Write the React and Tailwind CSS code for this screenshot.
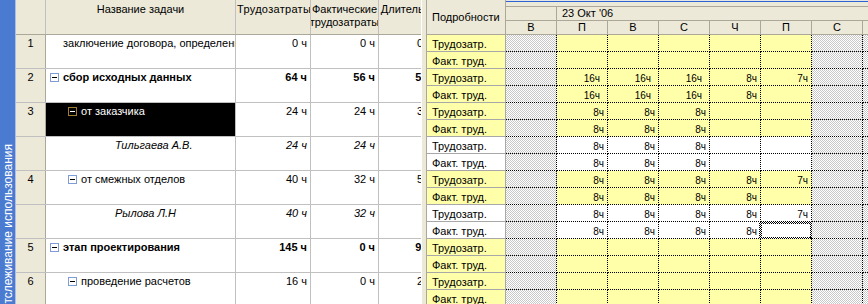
import React from "react";

const YEL = "bg-[#ffffaa]";
const GRY =
  "bg-[#e4e4e4] bg-[url('data:image/svg+xml,%3Csvg%20xmlns=%22http://www.w3.org/2000/svg%22%20width=%222%22%20height=%222%22%20shape-rendering=%22crispEdges%22%3E%3Crect%20width=%222%22%20height=%222%22%20fill=%22%23ffffff%22/%3E%3Cpath%20d=%22M0%200h1v1H0zM1%201h1v1H1z%22%20fill=%22%23c8c8c8%22/%3E%3C/svg%3E')] bg-repeat bg-fixed";
const SELFRAME =
  "bg-[#808080] bg-[url('data:image/svg+xml,%3Csvg%20xmlns=%22http://www.w3.org/2000/svg%22%20width=%222%22%20height=%222%22%20shape-rendering=%22crispEdges%22%3E%3Crect%20width=%222%22%20height=%222%22%20fill=%22%23ffffff%22/%3E%3Cpath%20d=%22M0%200h1v1H0zM1%201h1v1H1z%22%20fill=%22%23000000%22/%3E%3C/svg%3E')] bg-repeat bg-fixed";

const rows = [
  { num: "1", name: "заключение договора, определение сроков", level: 1, box: false, work: "0 ч", act: "0 ч", dur: "0 дней" },
  { num: "2", name: "сбор исходных данных", level: 1, box: true, bold: true, work: "64 ч", act: "56 ч", dur: "5 дней" },
  { num: "3", name: "от заказчика", level: 2, box: true, selected: true, work: "24 ч", act: "24 ч", dur: "3 дней" },
  { num: "", name: "Тильгаева А.В.", assign: true, work: "24 ч", act: "24 ч", dur: "" },
  { num: "4", name: "от смежных отделов", level: 2, box: true, work: "40 ч", act: "32 ч", dur: "5 дней" },
  { num: "", name: "Рылова Л.Н", assign: true, work: "40 ч", act: "32 ч", dur: "" },
  { num: "5", name: "этап проектирования", level: 1, box: true, bold: true, work: "145 ч", act: "0 ч", dur: "9 дней" },
  { num: "6", name: "проведение расчетов", level: 2, box: true, work: "16 ч", act: "0 ч", dur: "2 дней" },
];

const groups = [
  { a: false, t: [], f: [] },
  { a: false, t: ["", "16ч", "16ч", "16ч", "8ч", "7ч"], f: ["", "16ч", "16ч", "16ч", "8ч"] },
  { a: false, t: ["", "8ч", "8ч", "8ч"], f: ["", "8ч", "8ч", "8ч"] },
  { a: true, t: ["", "8ч", "8ч", "8ч"], f: ["", "8ч", "8ч", "8ч"] },
  { a: false, t: ["", "8ч", "8ч", "8ч", "8ч", "7ч"], f: ["", "8ч", "8ч", "8ч", "8ч"] },
  { a: true, t: ["", "8ч", "8ч", "8ч", "8ч", "7ч"], f: ["", "8ч", "8ч", "8ч", "8ч"], sel: 5 },
  { a: false, t: [], f: [] },
  { a: false, t: [], f: [] },
];

const days = ["В", "П", "В", "С", "Ч", "П", "С", "В"];
const weekend = [true, false, false, false, false, false, true, true];

function MinusBox({ selected }) {
  return (
    <div
      className={
        selected
          ? "mt-[2px] mr-[4px] w-[9px] h-[9px] shrink-0 border border-[#a08030] bg-black flex items-center justify-center"
          : "mt-[2px] mr-[4px] w-[9px] h-[9px] shrink-0 border border-[#7f9cd8] bg-white flex items-center justify-center"
      }
    >
      <div className={selected ? "w-[5px] h-px bg-white" : "w-[5px] h-px bg-black"} />
    </div>
  );
}

function Sidebar() {
  return (
    <div className="w-[16px] h-full shrink-0 bg-[#4b7bd1] border-r border-[#a9bfe8] overflow-hidden">
      <div className="h-[456px] flex items-center justify-center">
        <span className="[writing-mode:vertical-rl] rotate-180 text-white text-[12px] leading-[14px] whitespace-nowrap">
          Отслеживание использования
        </span>
      </div>
    </div>
  );
}

function LeftTable() {
  return (
    <div className="w-[405px] h-full shrink-0 overflow-hidden">
      <div className="w-[439px]">
        <div className="flex h-[35px] bg-[#ece9d8] border-b border-[#aca899]">
          <div className="w-[30px] shrink-0 border-r border-[#c0c0c0]" />
          <div className="w-[190px] shrink-0 border-r border-[#c0c0c0] text-center pt-[3px] whitespace-nowrap overflow-hidden">
            Название задачи
          </div>
          <div className="w-[75px] shrink-0 border-r border-[#c0c0c0] text-left pl-px pt-[3px] whitespace-nowrap overflow-hidden tracking-[0.3px]">
            Трудозатраты
          </div>
          <div className="w-[68px] shrink-0 border-r border-[#c0c0c0] pt-[3px] whitespace-nowrap overflow-hidden flex flex-col items-center">
            <div>Фактические</div>
            <div>трудозатраты</div>
          </div>
          <div className="w-[76px] shrink-0 border-r border-[#c0c0c0] text-center pt-[3px] whitespace-nowrap overflow-hidden">
            Длительность
          </div>
        </div>
        {rows.map((r, i) => {
          const weight = r.bold ? "font-bold" : "";
          const ital = r.assign ? "italic" : "";
          const pl = r.assign ? "pl-[69px]" : r.level === 2 ? "pl-[22px]" : r.box ? "pl-[4px]" : "pl-[17px]";
          return (
            <div key={i} className="flex h-[34px] border-b border-[#c0c0c0]">
              <div className="w-[30px] shrink-0 bg-[#ece9d8] border-r border-[#aca899] text-center pt-[2px]">{r.num}</div>
              <div
                className={`w-[190px] shrink-0 border-r border-[#c0c0c0] flex items-start pt-[2px] whitespace-nowrap overflow-hidden ${pl} ${
                  r.selected ? "bg-black text-white" : ""
                }`}
              >
                {r.box && <MinusBox selected={r.selected} />}
                <span className={`${weight} ${ital}`}>{r.name}</span>
              </div>
              <div className={`w-[75px] shrink-0 border-r border-[#c0c0c0] text-right pr-[3px] pt-[2px] whitespace-nowrap ${weight} ${ital}`}>
                {r.work}
              </div>
              <div className={`w-[68px] shrink-0 border-r border-[#c0c0c0] text-right pr-[3px] pt-[2px] whitespace-nowrap ${weight} ${ital}`}>
                {r.act}
              </div>
              <div className={`w-[76px] shrink-0 border-r border-[#c0c0c0] text-right pr-[3px] pt-[2px] whitespace-nowrap ${weight}`}>
                {r.dur}
              </div>
            </div>
          );
        })}
      </div>
    </div>
  );
}

function Splitter() {
  return <div className="w-[6px] h-full shrink-0 bg-[#ece9d8] border-l border-white border-r border-r-[#aca899]" />;
}

function TimeCell({ v, idx, assign, sel }) {
  const bg = weekend[idx] ? GRY : assign ? "bg-white" : YEL;
  const pad = v && v.length === 3 ? "pr-[7px]" : "pr-[3px]";
  return (
    <div className={`relative w-[51px] shrink-0 h-full border-r border-b border-dotted border-black text-right text-[10px] pt-[3px] whitespace-nowrap ${pad} ${bg}`}>
      {v}
      {sel && (
        <div className={`absolute -left-[2px] -top-[1px] w-[54px] h-[19px] ${SELFRAME}`}>
          <div className="absolute inset-[3px] bg-white" />
          <div className="absolute -right-[2px] -bottom-[2px] w-[5px] h-[5px] bg-black flex items-center justify-center">
            <div className="w-px h-px bg-white" />
          </div>
        </div>
      )}
    </div>
  );
}

function SubRow({ label, vals, assign, sel }) {
  return (
    <div className="flex h-[17px] shrink-0">
      <div
        className={`w-[79px] shrink-0 h-full border-r border-b border-[#a8a8a8] pl-[5px] pt-[3px] whitespace-nowrap ${
          assign ? "bg-white" : YEL
        }`}
      >
        {label}
      </div>
      <div className="flex overflow-hidden">
        {days.map((d, idx) => (
          <TimeCell key={idx} v={vals[idx] || ""} idx={idx} assign={assign} sel={sel === idx} />
        ))}
      </div>
    </div>
  );
}

function RightPane() {
  return (
    <div className="flex-1 min-w-0 h-full flex flex-col overflow-hidden">
      <div className="flex h-[35px] shrink-0">
        <div className="w-[79px] shrink-0 bg-[#ece9d8] border-r border-b border-[#aca899] flex items-center pl-[5px] whitespace-nowrap">
          Подробности
        </div>
        <div className="flex-1 min-w-0 flex flex-col overflow-hidden">
          <div className="h-[1px] bg-[#e4e4e4]" />
          <div className="h-[1px] bg-[#2d62d4]" />
          <div className="h-[5px] bg-[#ece9d8] border-b border-[#aca899]" />
          <div className="h-[14px] flex bg-[#ece9d8] border-b border-[#aca899] whitespace-nowrap">
            <div className="w-[51px] shrink-0 border-r border-[#aca899]" />
            <div className="w-[357px] shrink-0 pl-[5px]">23 Окт '06</div>
          </div>
          <div className="h-[14px] flex bg-[#ece9d8] border-b border-[#aca899]">
            {days.map((d, i) => (
              <div key={i} className="w-[51px] shrink-0 border-r border-[#aca899] text-center">
                {d}
              </div>
            ))}
          </div>
        </div>
      </div>
      {groups.map((g, i) => (
        <React.Fragment key={i}>
          <SubRow label="Трудозатр." vals={g.t} assign={g.a} />
          <SubRow label="Факт. труд." vals={g.f} assign={g.a} sel={g.sel} />
        </React.Fragment>
      ))}
    </div>
  );
}

export default function App() {
  return (
    <div className="w-[868px] h-[304px] overflow-hidden flex bg-white font-['Liberation_Sans',Arial,sans-serif] text-[11px] leading-[13px] text-black">
      <Sidebar />
      <LeftTable />
      <Splitter />
      <RightPane />
    </div>
  );
}
